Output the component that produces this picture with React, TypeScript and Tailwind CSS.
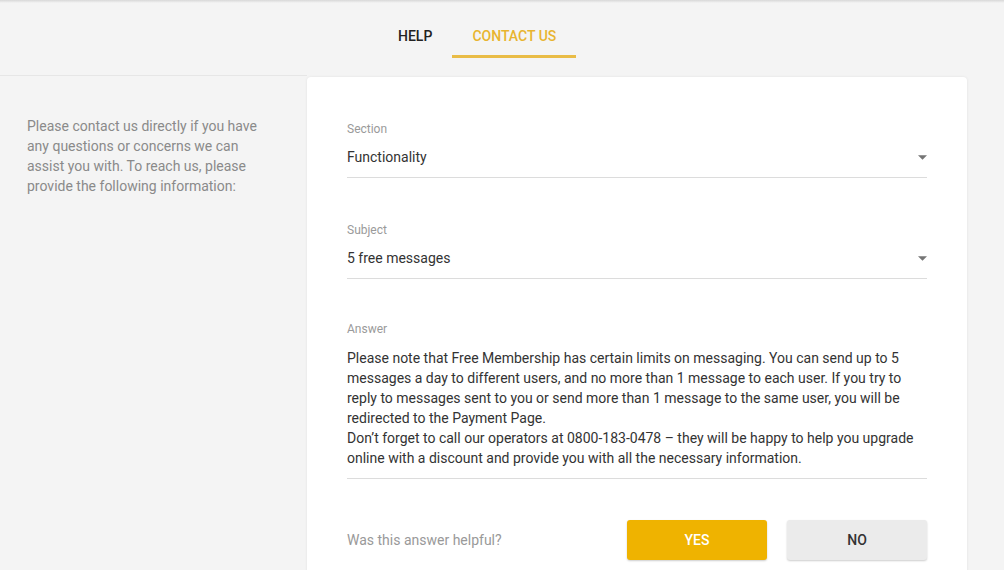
import React from "react";

function Caret() {
  return (
    <svg width="9" height="5" viewBox="0 0 10 5" className="shrink-0">
      <path d="M0 0 L10 0 L5 5 Z" fill="#757575" />
    </svg>
  );
}

function SelectField({ label, value }: { label: string; value: string }) {
  return (
    <div>
      <div className="text-[12px] leading-[14px] text-[#9a9a9a]">{label}</div>
      <div className="mt-[13px] flex items-center justify-between border-b border-[#dcdcdc] pb-[12px] pr-[0px]">
        <span className="text-[14px] leading-[16px] text-[#333]">{value}</span>
        <Caret />
      </div>
    </div>
  );
}

export default function App() {
  return (
    <div
      className="h-[570px] w-[1004px] overflow-hidden bg-[#f4f4f4]"
      style={{ fontFamily: "Roboto, 'Liberation Sans', sans-serif" }}
    >
      <div className="h-[3px] bg-gradient-to-b from-[#d8d8d8] to-[#f4f4f4]" />
      <div className="flex pl-[378px] pt-[24px]">
        <div className="flex flex-col items-center px-[20px]">
          <span className="text-[14px] font-medium leading-[18px] text-[#222]">HELP</span>
          <div className="mt-[10px] h-[3px] w-full" />
        </div>
        <div className="flex w-[124px] flex-col items-center">
          <span className="text-[14px] font-medium leading-[18px] text-[#e8b430]">CONTACT US</span>
          <div className="mt-[10px] h-[3px] w-full bg-[#e9bc46]" />
        </div>
      </div>
      <div className="mt-[17px] flex">
        <div className="w-[307px] shrink-0 border-t border-[#e6e6e6] pl-[27px] pr-[40px] pt-[40px]">
          <p className="text-[14px] leading-[20px] text-[#8a8a8a]">
            Please contact us directly if you have any questions or concerns we can assist you with. To reach us, please provide the following information:
          </p>
        </div>
        <div className="mt-[2px] h-[520px] w-[660px] rounded-[4px] bg-white px-[40px] pt-[45px] shadow-[0_0_3px_rgba(0,0,0,0.08)]">
          <SelectField label="Section" value="Functionality" />
          <div className="mt-[45px]">
            <SelectField label="Subject" value="5 free messages" />
          </div>
          <div className="mt-[43px]">
            <div className="text-[12px] leading-[14px] text-[#9a9a9a]">Answer</div>
            <div className="mt-[12px] border-b border-[#dcdcdc] pb-[10px] text-[14px] leading-[20px] text-[#333]">
              Please note that Free Membership has certain limits on messaging. You can send up to 5 messages a day to different users, and no more than 1 message to each user. If you try to reply to messages sent to you or send more than 1 message to the same user, you will be redirected to the Payment Page.
              <br />
              Don’t forget to call our operators at 0800-183-0478 – they will be happy to help you upgrade online with a discount and provide you with all the necessary information.
            </div>
          </div>
          <div className="mt-[41px] flex items-center">
            <span className="flex-1 text-[14px] text-[#999]">Was this answer helpful?</span>
            <button className="h-[40px] w-[140px] rounded-[3px] bg-[#efb300] text-[14px] font-medium text-white shadow-[0_1px_2px_rgba(0,0,0,0.2)]">
              YES
            </button>
            <button className="ml-[20px] h-[40px] w-[140px] rounded-[3px] bg-[#ebebeb] text-[14px] font-medium text-[#333] shadow-[0_1px_2px_rgba(0,0,0,0.2)]">
              NO
            </button>
          </div>
        </div>
      </div>
    </div>
  );
}
